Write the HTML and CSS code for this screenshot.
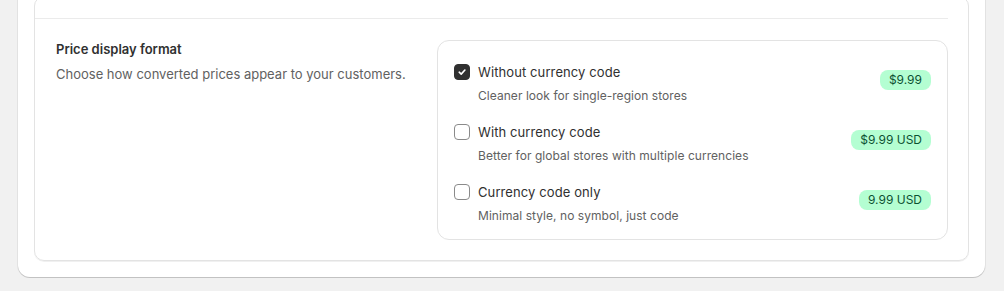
FILE: index.html
```html
<!DOCTYPE html>
<html lang="en">
<head>
    <meta charset="UTF-8">
    <meta name="viewport" content="width=device-width, initial-scale=1.0">
    <title>Currency settings</title>
    <link rel="stylesheet" href="styles.css">
</head>
<body>
    <div class="page">
        <div class="card">
            <div class="inner-card">
                <div class="prev-row"></div>
                <div class="setting-row">
                    <div class="setting-info">
                        <div class="setting-title">Price display format</div>
                        <div class="setting-desc">Choose how converted prices appear to your customers.</div>
                    </div>
                    <div class="options">
                        <label class="option">
                            <span class="checkbox checked">
                                <svg width="10" height="10" viewBox="0 0 10 10"><path d="M2.2 5.2 L4.2 7.1 L7.9 3" fill="none" stroke="#fff" stroke-width="1.6" stroke-linecap="round" stroke-linejoin="round"/></svg>
                            </span>
                            <span class="option-text">
                                <span class="option-label">Without currency code</span>
                                <span class="option-desc">Cleaner look for single-region stores</span>
                            </span>
                            <span class="badge">$9.99</span>
                        </label>
                        <label class="option">
                            <span class="checkbox"></span>
                            <span class="option-text">
                                <span class="option-label">With currency code</span>
                                <span class="option-desc">Better for global stores with multiple currencies</span>
                            </span>
                            <span class="badge">$9.99 USD</span>
                        </label>
                        <label class="option">
                            <span class="checkbox"></span>
                            <span class="option-text">
                                <span class="option-label">Currency code only</span>
                                <span class="option-desc">Minimal style, no symbol, just code</span>
                            </span>
                            <span class="badge">9.99 USD</span>
                        </label>
                    </div>
                </div>
            </div>
        </div>
    </div>
</body>
</html>
```

FILE: styles.css
```css
body {
    margin: 0;
    background-color: #f1f1f1;
    font-family: Inter, "Noto Sans", sans-serif;
    color: #303030;
    overflow: hidden;
}
.page {
    padding: 0 19px 13px 18px;
    margin-top: -20px;
}
.card {
    background: #fff;
    border-radius: 12px;
    padding: 16px 16px 16px 16px;
    box-shadow: 0 1px 0 rgba(0, 0, 0, 0.14), 0 0 0 1px rgba(0, 0, 0, 0.06);
}
.inner-card {
    border: 1px solid #e3e3e3;
    border-radius: 10px;
    box-shadow: 0 1px 0 rgba(0, 0, 0, 0.06);
}
.prev-row {
    height: 21px;
    border-bottom: 1px solid #ebebeb;
    margin-right: 20px;
}
.setting-row {
    display: grid;
    grid-template-columns: 1fr 511px;
    padding: 21px 20px 20px 20px;
}
.setting-title {
    font-size: 13px;
    font-weight: 600;
    line-height: 20px;
    margin-left: 1px;
    margin-top: -1px;
}
.setting-desc {
    font-size: 13px;
    line-height: 20px;
    color: #616161;
    margin-top: 5px;
    margin-left: 1px;
}
.options {
    border: 1px solid #e3e3e3;
    border-radius: 12px;
    padding: 21px 16px 14px 16px;
    display: flex;
    flex-direction: column;
    gap: 17px;
}
.option {
    display: flex;
    align-items: flex-start;
    gap: 8px;
}
.checkbox {
    width: 14px;
    height: 14px;
    margin-top: 2px;
    border: 1px solid #8a8a8a;
    border-radius: 4px;
    display: flex;
    align-items: center;
    justify-content: center;
    flex-shrink: 0;
}
.checkbox.checked {
    background: #303030;
    border-color: #303030;
}
.option-text {
    flex: 1;
    display: flex;
    flex-direction: column;
}
.option-label {
    font-size: 13px;
    line-height: 20px;
    letter-spacing: 0.1px;
}
.option-desc {
    font-size: 12px;
    line-height: 18px;
    color: #616161;
    margin-top: 5px;
    letter-spacing: 0.05px;
}
.badge {
    margin-top: 8px;
    height: 20px;
    line-height: 20px;
    padding: 0 9px;
    border-radius: 8px;
    background: #b4fed2;
    color: #0c5132;
    font-size: 12px;
}
```
